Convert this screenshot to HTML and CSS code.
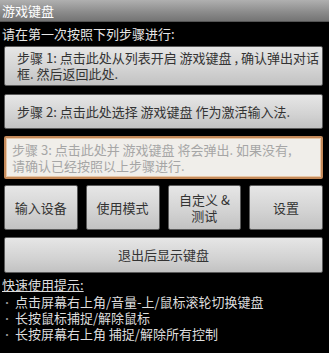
FILE: index.html
```html
<!DOCTYPE html>
<html lang="zh">
<head>
  <meta charset="UTF-8">
  <title>游戏键盘</title>
  <link rel="stylesheet" href="styles.css">
</head>
<body>

  <div class="titlebar">游戏键盘</div>

  <div class="intro">请在第一次按照下列步骤进行:</div>

  <div class="steps">
    <div class="btn step step1">步骤 1: 点击此处从列表开启 游戏键盘 , 确认弹出对话<br>框. 然后返回此处.</div>
    <div class="btn step step2">步骤 2: 点击此处选择 游戏键盘 作为激活输入法.</div>
    <div class="btn step step3 disabled">步骤 3: 点击此处并 游戏键盘 将会弹出. 如果没有,<br>请确认已经按照以上步骤进行.</div>

    <div class="btn-row">
      <div class="btn small">输入设备</div>
      <div class="btn small">使用模式</div>
      <div class="btn small">自定义 &amp;<br>测试</div>
      <div class="btn small">设置</div>
    </div>

    <div class="btn wide">退出后显示键盘</div>
  </div>

  <div class="tips">
    <div class="tips-title">快速使用提示:</div>
    <div class="tip"><span class="dot">•</span> 点击屏幕右上角/音量-上/鼠标滚轮切换键盘</div>
    <div class="tip"><span class="dot">•</span> 长按鼠标捕捉/解除鼠标</div>
    <div class="tip"><span class="dot">•</span> 长按屏幕右上角 捕捉/解除所有控制</div>
    <div class="tips-more">以下是高级提示:</div>
  </div>

</body>
</html>
```

FILE: styles.css
```css
body {
  margin: 0;
  background: #000;
  font-family: "Noto Sans CJK SC", "DejaVu Sans", sans-serif;
  overflow: hidden;
}

.titlebar {
  height: 21px;
  line-height: 21px;
  padding-left: 2px;
  font-size: 13px;
  color: #fff;
  background: linear-gradient(#b0b0b0, #8a8a8a 60%, #747474);
  border-bottom: 1px solid #555;
}

.intro {
  margin-top: 3px;
  padding-left: 2px;
  font-size: 13px;
  line-height: 18px;
  color: #e6e6e6;
}

.steps {
  padding: 0 6px 0 4px;
  display: flex;
  flex-direction: column;
}

.btn {
  box-sizing: border-box;
  border: 1px solid #5a5a5a;
  border-radius: 2px;
  background: linear-gradient(#e6e6e6, #d2d2d2 60%, #c2c2c2);
  color: #333;
  font-size: 13px;
  line-height: 16px;
}

.step {
  display: flex;
  align-items: center;
  padding-left: 12px;
  white-space: nowrap;
}

.step1 {
  margin-top: 3px;
  height: 40px;
}

.step2 {
  margin-top: 8px;
  height: 35px;
}

.step3 {
  margin-top: 7px;
  height: 43px;
  padding-left: 6px;
}

.disabled {
  border: 2px solid #c58a5a;
  box-shadow: inset 0 0 0 1px #e8c8a8;
  background: #f0eeea;
  color: #a6a6a6;
}

.btn-row {
  margin-top: 6px;
  display: flex;
  gap: 8px;
}

.small {
  flex: 1;
  height: 45px;
  display: flex;
  align-items: center;
  justify-content: center;
  text-align: center;
}

.wide {
  margin-top: 7px;
  height: 36px;
  display: flex;
  align-items: center;
  justify-content: center;
}

.tips {
  margin-top: 4px;
  padding-left: 2px;
  font-size: 13px;
  line-height: 15px;
  color: #dedede;
}

.tips-title {
  text-decoration: underline;
  margin-bottom: 2px;
}

.dot {
  color: #999;
  font-size: 10px;
}

.tips-more {
  margin-top: 14px;
}
```
